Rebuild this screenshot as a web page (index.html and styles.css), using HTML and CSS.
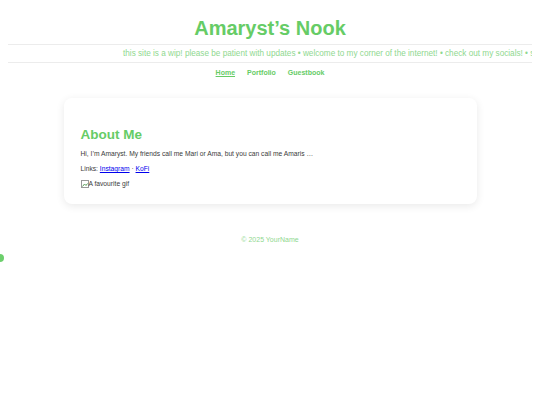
FILE: index.html
```html
<!DOCTYPE html>
<html lang="en">
<head>
  <meta charset="UTF-8" />
  <meta name="viewport" content="width=device-width, initial-scale=1.0"/>
  <title>Amaryst’s Nook</title>
  <link rel="stylesheet" href="styles.css">
</head>
<body>
  <header class="site-header">
    <h1>Amaryst’s Nook</h1>
  </header>

  <!-- scrolling notice -->
  <div class="ticker">
    <span>this site is a wip! please be patient with updates • welcome to my corner of the internet! • check out my socials! • say hi in the guestbook!</span>
  </div>

  <nav class="site-nav">
    <a href="#" class="active">Home</a>
    <a href="#">Portfolio</a>
    <a href="#">Guestbook</a>
  </nav>

  <main class="card">
    <h2>About Me</h2>
    <p>Hi, I’m Amaryst. My friends call me Mari or Ama, but you can call me Amaris …</p>
    <p>Links: <a href="#" class="ext">Instagram</a> · <a href="#" class="ext">KoFi</a></p>
    <p class="gif">
      <svg width="8" height="8" viewBox="0 0 8 8"><rect x="0.5" y="0.5" width="7" height="7" fill="#fff" stroke="#999"/><path d="M1.5 6.5 L3.5 4 L5 5.5 L6.5 3.5" fill="none" stroke="#5a9e5a"/></svg><span>A favourite gif</span>
    </p>
  </main>

  <footer class="site-footer">© 2025 YourName</footer>

  <div class="dot"></div>
</body>
</html>
```
FILE: styles.css
```css
body {
  margin: 8px;
  font-family: 'Liberation Sans', Arial, sans-serif;
  background: #fff;
  color: #444;
}

.site-header {
  text-align: center;
  padding-top: 8px;
  margin-bottom: 4px;
}

.site-header h1 {
  margin: 0;
  font-size: 20px;
  line-height: 24px;
  color: #66cc66;
}

.ticker {
  border-top: 1px solid #ececec;
  border-bottom: 1px solid #ececec;
  padding: 4px 0 4px 115px;
  overflow: hidden;
  white-space: nowrap;
  font-size: 8.2px;
  line-height: 9px;
  color: #8fd88f;
}

.site-nav {
  display: flex;
  justify-content: center;
  gap: 12px;
  margin-top: 5px;
  font-size: 7px;
  line-height: 10px;
  font-weight: bold;
}

.site-nav a {
  color: #66cc66;
  text-decoration: none;
}

.site-nav a.active {
  text-decoration: underline;
}

.card {
  max-width: 379px;
  margin: 20px auto 0;
  padding: 28px 17px 16px;
  background: white;
  border-radius: 8px;
  box-shadow: 0 2px 8px rgba(0, 0, 0, 0.09);
}

.card h2 {
  margin: 0 0 7px;
  font-size: 13.5px;
  line-height: 17px;
  color: #66cc66;
}

.card p {
  margin: 7px 0 0;
  font-size: 6.7px;
  line-height: 8px;
  color: #3a3a3a;
}

.card h2 + p {
  margin-top: 0;
}

.card a.ext {
  color: #0000ee;
}

.gif {
  display: flex;
  align-items: center;
}

.gif svg {
  display: block;
}

.site-footer {
  margin-top: 31px;
  text-align: center;
  font-size: 7px;
  line-height: 10px;
  color: #8fd88f;
}

.dot {
  position: fixed;
  left: -4px;
  top: 254px;
  width: 8px;
  height: 8px;
  border-radius: 50%;
  background: #6ccf6c;
}
```
